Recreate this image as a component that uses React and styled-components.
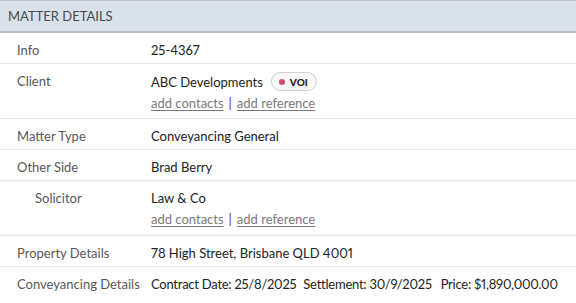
import React from "react";
import styled, { createGlobalStyle } from "styled-components";

const Global = createGlobalStyle`
  html, body { margin: 0; padding: 0; background: #fff; }
  body {
    font-family: "Lato", "Noto Sans", sans-serif;
    font-variant-numeric: proportional-nums;
  }
`;

const Panel = styled.section`
  width: 576px;
  background: #fff;
`;

const Header = styled.header`
  height: 30px;
  border-top: 1px solid #c4c4c4;
  border-bottom: 2px solid #bdbdbd;
  background: #d9e2ea;
  display: flex;
  align-items: center;
  padding-left: 8px;
  font-size: 13px;
  color: #4a4a4a;
`;

const Row = styled.div`
  display: grid;
  grid-template-columns: 151px 1fr;
  border-bottom: 1px solid #e6e6e6;
  padding: ${(p) => (p.$tall ? "8px 0 5px" : "8px 0 4px")};
  min-height: ${(p) => (p.$tall ? "41px" : "18px")};
  &:last-child { border-bottom: none; }
`;

const Label = styled.div`
  padding-left: ${(p) => (p.$indent ? "35px" : "17px")};
  font-size: 13px;
  line-height: 18px;
  color: #575757;
  white-space: nowrap;
`;

const Value = styled.div`
  font-size: 13px;
  line-height: 18px;
  color: #222;
  display: flex;
  flex-direction: column;
  gap: 3px;
`;

const Line = styled.div`
  display: flex;
  align-items: center;
  gap: 8px;
  white-space: nowrap;
`;

const Text = styled.div`
  white-space: nowrap;
  letter-spacing: ${(p) => (p.$tight ? "-0.25px" : "0")};
`;

const Spacer = styled.span`
  display: inline-block;
  width: ${(p) => p.$w}px;
`;

const Links = styled.div`
  color: #7a7a7a;
  line-height: 18px;
  a {
    color: #7a7a7a;
    text-decoration: underline;
    text-underline-offset: 2px;
  }
  span { color: #444; margin: 0 5px; }
`;

const Badge = styled.span`
  display: inline-flex;
  align-items: center;
  gap: 5px;
  height: 17px;
  padding: 0 8px 0 7px;
  border: 1px solid #cfcfcf;
  border-radius: 10px;
  background: #f8f8f8;
  font-size: 10px;
  font-weight: 900;
  color: #222;
`;

const Dot = styled.i`
  width: 6px;
  height: 6px;
  border-radius: 50%;
  background: #cf4f6a;
`;

const LinkLine = () => (
  <Links>
    <a href="#">add contacts</a>
    <span>|</span>
    <a href="#">add reference</a>
  </Links>
);

export default function App() {
  return (
    <>
      <Global />
      <Panel>
        <Header>MATTER DETAILS</Header>
        <Row>
          <Label>Info</Label>
          <Value>25-4367</Value>
        </Row>
        <Row $tall>
          <Label>Client</Label>
          <Value>
            <Line>
              ABC Developments
              <Badge>
                <Dot />
                VOI
              </Badge>
            </Line>
            <LinkLine />
          </Value>
        </Row>
        <Row>
          <Label>Matter Type</Label>
          <Value>Conveyancing General</Value>
        </Row>
        <Row>
          <Label>Other Side</Label>
          <Value>Brad Berry</Value>
        </Row>
        <Row $tall>
          <Label $indent>Solicitor</Label>
          <Value>
            <Text>Law &amp; Co</Text>
            <LinkLine />
          </Value>
        </Row>
        <Row>
          <Label>Property Details</Label>
          <Value>78 High Street, Brisbane QLD 4001</Value>
        </Row>
        <Row>
          <Label>Conveyancing Details</Label>
          <Value>
            <Text $tight>
              Contract Date: 25/8/2025<Spacer $w={7} />Settlement: 30/9/2025<Spacer $w={9} />Price: $1,890,000.00
            </Text>
          </Value>
        </Row>
      </Panel>
    </>
  );
}
